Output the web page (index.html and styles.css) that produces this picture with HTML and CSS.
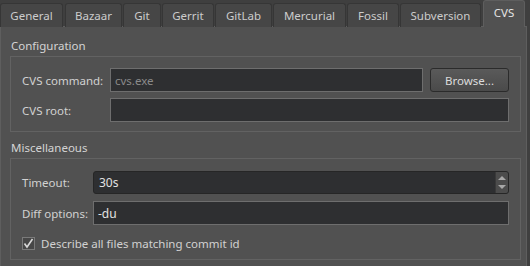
FILE: index.html
```html
<!DOCTYPE html>
<html>
<head>
<meta charset="utf-8">
<link rel="stylesheet" href="styles.css">
</head>
<body>
<div class="tabs">
  <div class="tab t-general">General</div>
  <div class="tab t-bazaar">Bazaar</div>
  <div class="tab t-git">Git</div>
  <div class="tab t-gerrit">Gerrit</div>
  <div class="tab t-gitlab">GitLab</div>
  <div class="tab t-merc">Mercurial</div>
  <div class="tab t-fossil">Fossil</div>
  <div class="tab t-svn">Subversion</div>
  <div class="tab active t-cvs">CVS</div>
</div>
<div class="panel">
  <div class="group-title first">Configuration</div>
  <div class="group">
    <div class="grid grid-config">
      <label class="lbl">CVS command:</label>
      <div class="row-field">
        <div class="input grow"><span class="placeholder">cvs.exe</span></div>
        <button class="btn">Browse...</button>
      </div>
      <label class="lbl">CVS root:</label>
      <div class="input"></div>
    </div>
  </div>
  <div class="group-title">Miscellaneous</div>
  <div class="group group-misc">
    <div class="grid grid-misc">
      <label class="lbl">Timeout:</label>
      <div class="spin">
        <span class="spin-text">30s</span>
        <div class="spin-btns">
          <svg width="12" height="20" viewBox="0 0 12 20">
            <path d="M2 7 L6 3 L10 7 Z" fill="#a8a8a8"/>
            <path d="M2 12 L6 16 L10 12 Z" fill="#a8a8a8"/>
          </svg>
        </div>
      </div>
      <label class="lbl">Diff options:</label>
      <div class="input"><span class="value">-du</span></div>
    </div>
    <div class="check-row">
      <span class="checkbox">
        <svg width="13" height="13" viewBox="0 0 13 13">
          <path d="M2.5 6.5 L5 10 L10.5 2" fill="none" stroke="#d8d8d8" stroke-width="1.6"/>
        </svg>
      </span>
      <span class="check-label">Describe all files matching commit id</span>
    </div>
  </div>
</div>
</body>
</html>
```
FILE: styles.css
```css
html, body {
  margin: 0;
  padding: 0;
  background: #3f3f3f;
  width: 530px;
  height: 266px;
  overflow: hidden;
  font-family: "Noto Sans", "Open Sans", sans-serif;
  font-size: 11.5px;
  color: #d2d2d2;
}

.tabs {
  display: flex;
  align-items: flex-end;
  height: 26px;
  gap: 1px;
}

.tab {
  box-sizing: border-box;
  height: 24px;
  margin-bottom: -1px;
  background: #464646;
  border: 1px solid #363636;
  border-bottom: none;
  border-radius: 3px 3px 0 0;
  display: flex;
  align-items: center;
  justify-content: center;
  color: #cccccc;
  position: relative;
}

.t-general { width: 63px; }
.t-bazaar { width: 57px; margin-left: 1px; }
.t-git { width: 38px; }
.t-gerrit { width: 52px; }
.t-gitlab { width: 57px; }
.t-merc { width: 73px; }
.t-fossil { width: 52px; }
.t-svn { width: 81px; }

.tab.active {
  width: 42px;
  height: 27px;
  background: #515151;
  border-color: #5e5e5e;
  color: #e4e4e4;
  z-index: 2;
  padding-bottom: 3px;
  margin-left: 1px;
}

.panel {
  box-sizing: border-box;
  width: 527px;
  height: 242px;
  background: #515151;
  border: 1px solid #5e5e5e;
  border-bottom: none;
  padding: 0 5px 0 9px;
}

.group-title {
  height: 20px;
  line-height: 20px;
  margin-left: 1px;
  margin-top: 6px;
  color: #d4d4d4;
}
.group-title.first {
  margin-top: 9px;
}

.group {
  box-sizing: border-box;
  border: 1px solid #626262;
  padding: 11px 11px 9px 11px;
}

.group-misc {
  padding-top: 12px;
  padding-bottom: 9px;
}

.grid {
  display: grid;
  align-items: center;
  row-gap: 6px;
}
.grid-config {
  grid-template-columns: 88px 1fr;
}
.grid-misc {
  grid-template-columns: 71px 1fr;
  row-gap: 7px;
}

.lbl {
  color: #d2d2d2;
}

.row-field {
  display: flex;
  gap: 7px;
  align-items: center;
}

.input {
  box-sizing: border-box;
  height: 24px;
  background: #2e2f31;
  border: 1px solid #6e6e6e;
  display: flex;
  align-items: center;
  padding-left: 4px;
}
.grow {
  flex: 1;
}

.placeholder {
  color: #8a8a8a;
}
.value {
  color: #e2e2e2;
  font-size: 12px;
}

.btn {
  box-sizing: border-box;
  width: 79px;
  height: 24px;
  background: linear-gradient(#5a5a5a, #4a4a4a);
  border: 1px solid #2b2b2b;
  border-radius: 3px;
  color: #dcdcdc;
  font-family: inherit;
  font-size: 11.5px;
  padding: 0;
}

.spin {
  box-sizing: border-box;
  height: 23px;
  background: #2e2f31;
  border: 1px solid #262626;
  border-radius: 3px;
  display: flex;
  align-items: center;
}
.spin-text {
  flex: 1;
  padding-left: 5px;
  color: #e2e2e2;
  font-size: 12px;
}
.spin-btns {
  box-sizing: border-box;
  width: 13px;
  height: 21px;
  background: #4c4c4c;
  border-left: 1px solid #3a3a3a;
  border-radius: 0 2px 2px 0;
  display: flex;
  align-items: center;
  justify-content: center;
}

.check-row {
  display: flex;
  align-items: center;
  gap: 6px;
  margin-top: 11px;
  height: 14px;
}
.checkbox {
  box-sizing: border-box;
  width: 13px;
  height: 13px;
  border: 1px solid #7a7a7a;
  background: #474747;
  display: flex;
}
.checkbox svg {
  margin: -1px;
}
.check-label {
  color: #d2d2d2;
}
```
